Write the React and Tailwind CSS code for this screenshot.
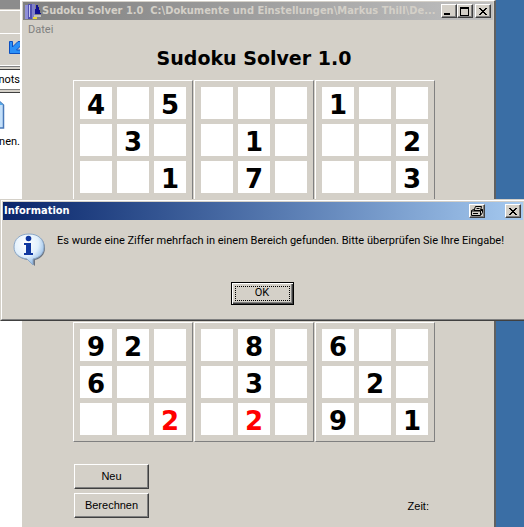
const ui = "font-['Roboto','DejaVu_Sans',sans-serif]";
const uiBold = "font-['DejaVu_Sans_Condensed','DejaVu_Sans',sans-serif] font-bold";

const boxes = [
  ["4", "", "5", "", "3", "", "", "", "1"],
  ["", "", "", "", "1", "", "", "7", ""],
  ["1", "", "", "", "", "2", "", "", "3"],
  ["", "", "", "", "", "", "", "", ""],
  ["", "", "", "", "", "", "", "", ""],
  ["", "", "", "", "", "", "", "", ""],
  ["9", "2", "", "6", "", "", "", "", "!2"],
  ["", "8", "", "", "3", "", "", "!2", ""],
  ["6", "", "", "", "2", "", "9", "", "1"],
];

const raised =
  "border border-t-white border-l-white border-r-[#404040] border-b-[#404040] bg-[#d4d0c8] shadow-[inset_-1px_-1px_0_#808080]";

function CaptionButton({ label, children }) {
  return (
    <button aria-label={label} className={`flex h-[14px] w-4 shrink-0 items-center justify-center ${raised}`}>
      {children}
    </button>
  );
}

function CloseGlyph() {
  return (
    <svg width="8" height="7" viewBox="0 0 8 7" shapeRendering="crispEdges" fill="#000" className="mr-px">
      <path d="M0 0h2v1h1v1h2v-1h1v-1h2v1h-1v1h-1v1h-1v1h1v1h1v1h1v1h-2v-1h-1v-1h-2v1h-1v1h-2v-1h1v-1h1v-1h1v-1h-1v-1h-1v-1h-1z" />
    </svg>
  );
}

function Cell({ value, name }) {
  const wrong = value.startsWith("!");
  return (
    <input
      aria-label={name}
      defaultValue={value.replace("!", "")}
      className={`size-8 bg-white pt-[3px] text-center font-['DejaVu_Sans',sans-serif] text-[26px] leading-7 font-bold outline-none ${wrong ? "text-[#ff0000]" : "text-black"}`}
    />
  );
}

function Explorer() {
  return (
    <div className={`absolute inset-y-0 left-0 w-5 overflow-hidden bg-white text-[11px] ${ui}`}>
      <div className="h-[9px] bg-[#8c8c8c]" />
      <div className="h-px bg-[#d4d0c8]" />
      <div className="h-6 border-t border-b border-t-white border-b-white bg-[#d4d0c8]" />
      <div className="flex h-8 items-start justify-end border-b border-white bg-[#d4d0c8] pt-[7px]">
        <svg width="11" height="13" viewBox="0 0 11 13">
          <path d="M.5 .5h3v5.500L9 .5h4v3L7.500 9H13v3.500H.5z" fill="#2a90f8" stroke="#0b4fc0" />
        </svg>
      </div>
      <div className="h-1 border-t border-b border-t-[#808080] border-b-[#404040] bg-[#d4d0c8]" />
      <div className="flex h-[19px] items-center justify-end leading-4">nots</div>
      <div className="h-1 border-t border-b border-t-[#808080] border-b-[#404040] bg-[#d4d0c8]" />
      <svg className="mt-[7px] block" width="6" height="30" viewBox="0 0 6 30">
        <path d="M-8 1H-1L3.500 5V28H-8z" fill="#c4e0fa" stroke="#4878b8" strokeWidth="1.500" />
        <path d="M-1 1v4h4.500z" fill="#58a8e8" />
      </svg>
      <div className="mt-1 flex justify-end leading-4">nen.</div>
    </div>
  );
}

function SolverWindow() {
  return (
    <main className="absolute inset-y-0 right-7 left-5 border-t border-r-2 border-l-2 border-t-white border-r-[#606060] border-l-white bg-[#d4d0c8]">
      <header className="mx-px mt-px flex h-[18px] items-center bg-linear-to-r from-[#808080] to-[#c0c0c0] pr-[2px] pl-[2px]">
        <svg width="17" height="17" viewBox="0 0 17 17" className="shrink-0" shapeRendering="crispEdges">
          <path d="M0 2h3v14H0z" fill="#9090d8" />
          <path d="M3 1h4v15H3z" fill="#5050b0" />
          <path d="M4 2h1v12H4z" fill="#c8c8f0" />
          <path d="M7 1h3v15H7z" fill="#8080c8" />
          <path d="M11 2h2l3 9h-6z" fill="#101090" />
          <path d="M9 12h7v2H9z" fill="#c0c0c0" />
          <path d="M8 14h4v2H8z" fill="#e8d838" />
        </svg>
        <h1 className={`min-w-0 flex-1 truncate whitespace-pre text-[11px] leading-4 text-[#d4d0c8] ${uiBold}`}>
          {"Sudoku Solver 1.0  C:\\Dokumente und Einstellungen\\Markus Thill\\De..."}
        </h1>
        <div className="ml-1 flex">
          <CaptionButton label="Minimieren">
            <span className="mt-[6px] mr-1 h-[2px] w-[6px] bg-black" />
          </CaptionButton>
          <CaptionButton label="Maximieren">
            <span className="mr-px h-[9px] w-[9px] border border-t-2 border-black" />
          </CaptionButton>
          <span className="w-[2px]" />
          <CaptionButton label="Schließen">
            <CloseGlyph />
          </CaptionButton>
        </div>
      </header>
      <nav className="flex h-5 items-center pl-[6px]">
        <button disabled className={`text-[11px] text-[#808080] ${ui}`}>Datei</button>
      </nav>
      <h2 className="mt-1 mb-2 ml-[51px] w-[362px] text-center font-['DejaVu_Sans',sans-serif] text-[19px] leading-7 font-bold">
        Sudoku Solver 1.0
      </h2>
      <div className="ml-[51px] grid w-[362px] grid-cols-3 gap-px">
        {boxes.map((box, b) => (
          <div
            key={b}
            className="grid grid-cols-3 gap-[5px] border border-t-white border-r-[#808080] border-b-[#808080] border-l-white p-[6px]"
          >
            {box.map((v, i) => (
              <Cell key={i} value={v} name={`Block ${b + 1}, Feld ${i + 1}`} />
            ))}
          </div>
        ))}
      </div>
      <div className="mt-[22px] mr-[65px] ml-[52px] flex items-end justify-between font-['Liberation_Sans',sans-serif] text-[11px]">
        <div className="flex flex-col gap-1">
          <button className={`h-[25px] w-[75px] ${raised}`}>Neu</button>
          <button className={`h-[25px] w-[75px] ${raised}`}>Berechnen</button>
        </div>
        <p className="mb-1">Zeit:</p>
      </div>
    </main>
  );
}

function InformationDialog() {
  return (
    <section
      role="dialog"
      aria-labelledby="dialog-title"
      className={`absolute inset-x-0 top-[199px] border-t border-b border-l border-t-[#d4d0c8] border-b-[#404040] border-l-[#d4d0c8] bg-[#d4d0c8] text-[11px] ${ui}`}
    >
      <div className="border-t border-b border-l border-t-white border-b-[#808080] border-l-white pt-px pb-[14px] pl-px">
        <header className="mr-px flex h-[18px] items-center bg-linear-to-r from-[#0a246a] to-[#a6caf0] pr-[2px] pl-px">
          <h2 id="dialog-title" className={`flex-1 text-white ${uiBold}`}>Information</h2>
          <CaptionButton label="Drucken">
            <svg width="12" height="10" viewBox="0 0 12 10" className="mr-px shrink-0" fill="#d4d0c8" stroke="#000">
              <path d="M.5 4.500l2-1h9v3l-2 3h-9z" />
              <path d="M3 4.500L4.500 .5h6L9.500 4.500z" />
              <path d="M.5 5h9v4M9.500 5.500l2-2M2 7.500h5M5.500 2.500h3" fill="none" />
            </svg>
          </CaptionButton>
          <span className="w-5" />
          <CaptionButton label="Schließen">
            <CloseGlyph />
          </CaptionButton>
        </header>
        <div className="flex gap-[11px] pt-[13px] pl-[10px]">
          <svg width="33" height="34" viewBox="0 0 33 34" className="shrink-0">
            <defs>
              <radialGradient id="bubble" cx="40%" cy="30%" r="75%">
                <stop offset="0" stopColor="#fff" />
                <stop offset=".55" stopColor="#e2f0fc" />
                <stop offset="1" stopColor="#7faee0" />
              </radialGradient>
            </defs>
            <path d="M17 2c9 0 15 5 15 13 0 7-5 11-10 12v6l-7-6C7 26 2 22 2 15 2 7 8 2 17 2z" fill="#485468" opacity=".75" />
            <path d="M16 1c9 0 15 5 15 13 0 7-5 11-11 12v6l-6-6C6 25 1 21 1 14 1 6 7 1 16 1z" fill="url(#bubble)" stroke="#8ca8c8" />
            <circle cx="15.500" cy="5.500" r="2.800" fill="#1038a0" />
            <path d="M12 10h6v10h2v2h-9v-2h2v-8h-2v-2z" fill="#1038a0" />
          </svg>
          <p className="leading-4 whitespace-nowrap">
            Es wurde eine Ziffer mehrfach in einem Bereich gefunden. Bitte überprüfen Sie Ihre Eingabe!
          </p>
        </div>
        <div className="mt-[15px] mr-[3px] flex justify-center">
          <button className="h-[23px] w-[63px] border border-black bg-[#d4d0c8] p-[3px] shadow-[inset_1px_1px_0_#fff,inset_-1px_-1px_0_#404040,inset_-2px_-2px_0_#808080]">
            <span className="flex h-full items-center justify-center border border-dotted border-black">OK</span>
          </button>
        </div>
      </div>
    </section>
  );
}

export default function App() {
  return (
    <div className="relative h-screen overflow-hidden bg-[#3a6ea5] text-black">
      <Explorer />
      <SolverWindow />
      <InformationDialog />
    </div>
  );
}
